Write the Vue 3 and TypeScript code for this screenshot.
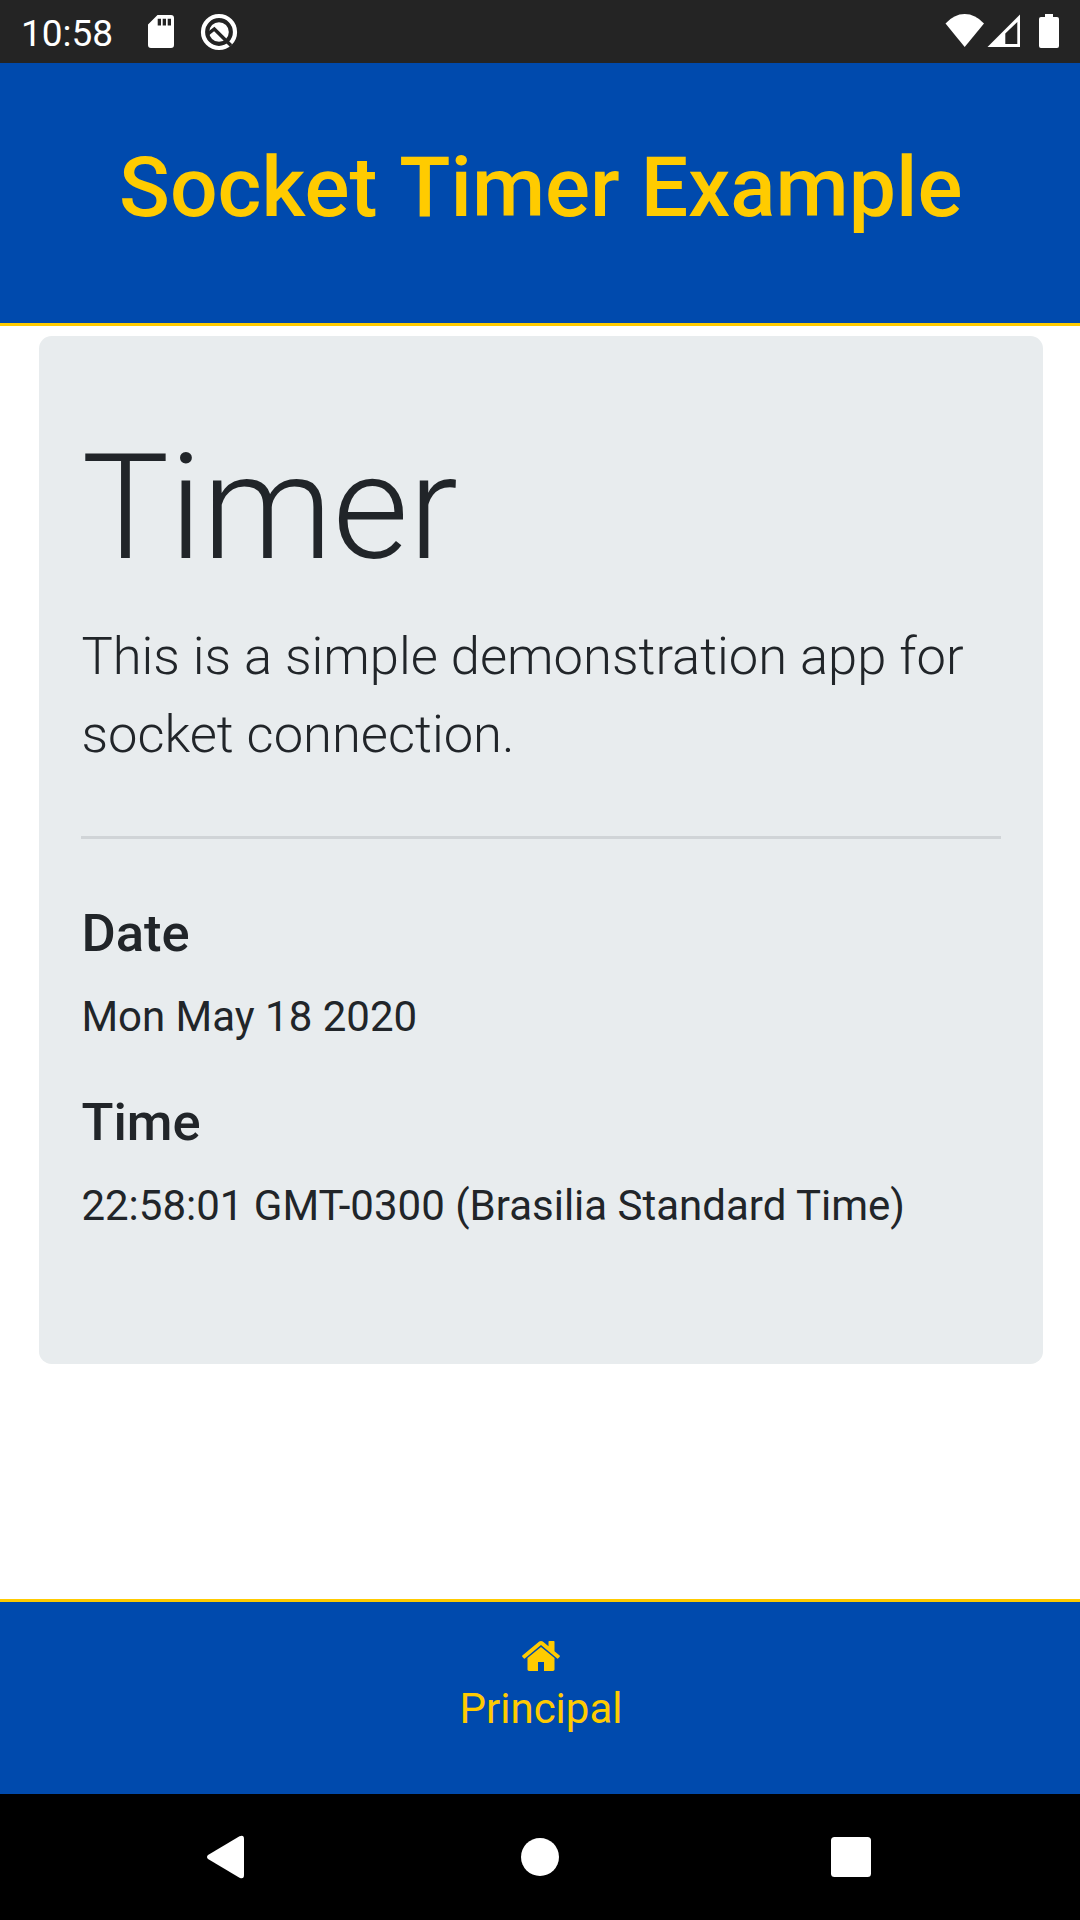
<script setup lang="ts">
interface Entry {
  label: string
  value: string
}

const entries: Entry[] = [
  { label: 'Date', value: 'Mon May 18 2020' },
  { label: 'Time', value: '22:58:01 GMT-0300 (Brasilia Standard Time)' },
]
</script>

<template>
  <div class="screen">
    <div class="status">
      <span class="clock">10:58</span>
      <svg class="sd" width="28" height="36" viewBox="0 0 28 36">
        <path fill="#fff" fill-rule="evenodd" d="M10.500 1H24a3 3 0 0 1 3 3V31a3 3 0 0 1-3 3H4a3 3 0 0 1-3-3V10.500zM10.700 4.800v6.700h3.300V4.800zM15.700 4.800v6.700h3.300V4.800zM20.700 4.800v6.700h3.300V4.800z" />
      </svg>
      <svg class="q" width="38" height="38" viewBox="0 0 38 38">
        <circle cx="19" cy="19" r="16" fill="none" stroke="#fff" stroke-width="4.200" />
        <circle cx="19" cy="19" r="9.800" fill="#fff" />
        <path d="M8 20.800L14.300 16L31 32.500" fill="none" stroke="#242424" stroke-width="3.400" />
      </svg>
      <div class="signals">
        <svg width="120" height="40" viewBox="0 0 120 40">
          <path fill="#fff" d="M.500 12.500Q9 3 19.700 3T39 12.500L19.700 36z" />
          <path fill="#fff" fill-rule="evenodd" d="M75 3.500V36H42.500zM72.300 11L60.300 22.500V33h12z" />
          <path fill="#fff" d="M100 3h8v3h4a2 2 0 0 1 2 2v27a2 2 0 0 1-2 2H96a2 2 0 0 1-2-2V8a2 2 0 0 1 2-2h4z" />
        </svg>
      </div>
    </div>

    <header class="header">
      <h1>Socket <span class="word">Timer</span> Example</h1>
    </header>

    <main class="content">
      <section class="jumbotron">
        <h2 class="display">Timer</h2>
        <p class="lead">This is a simple demonstration app for socket connection.</p>
        <hr />
        <template v-for="e in entries" :key="e.label">
          <h5>{{ e.label }}</h5>
          <p class="value">{{ e.value }}</p>
        </template>
      </section>
    </main>

    <footer class="footer">
      <svg width="42" height="42" viewBox="0 0 1792 1792">
        <path fill="currentColor" d="M1472 992v480q0 26-19 45t-45 19h-384v-384h-256v384h-384q-26 0-45-19t-19-45v-480q0-1 .5-3t.5-3l575-474 575 474q1 2 1 6zm223-69l-62 74q-8 9-21 11h-3q-13 0-21-7l-692-577-692 577q-12 8-24 7-13-2-21-11l-62-74q-8-10-7-23.500t11-21.500l719-599q32-26 76-26t76 26l244 204v-195q0-14 9-23t23-9h192q14 0 23 9t9 23v408l219 182q10 8 11 21.500t-7 23.500z" />
      </svg>
      <span>Principal</span>
    </footer>

    <nav class="navbar">
      <svg width="1080" height="126" viewBox="0 0 1080 126">
        <path fill="#fff" d="M208 61L239.500 42.300Q244 40.500 244 45V81Q244 85.500 239.500 83.700L208 65Q206 63 208 61z" />
        <circle cx="540" cy="63" r="19" fill="#fff" />
        <rect x="831" y="43" width="40" height="40" rx="3.500" fill="#fff" />
      </svg>
    </nav>
  </div>
</template>

<style>
body {
  margin: 0;
  background: #fff;
}
</style>

<style scoped>
.screen {
  width: 1080px;
  height: 1920px;
  display: flex;
  flex-direction: column;
  overflow: hidden;
  background: #fff;
  color: #212529;
  font-family: Roboto, "Liberation Sans", sans-serif;
}
h1, h2, h5, p {
  margin: 0;
}
svg {
  display: block;
  flex: none;
}
.status {
  height: 63px;
  flex: none;
  display: flex;
  align-items: flex-start;
  background: #242424;
  color: #fff;
}
.clock {
  width: 126px;
  padding-left: 21px;
  font-size: 37px;
  line-height: 67px;
  white-space: nowrap;
}
.sd {
  margin-top: 14px;
}
.q {
  margin: 13px 0 0 25px;
}
.signals {
  margin: 11px 15px 0 auto;
}
.header {
  box-sizing: border-box;
  height: 263px;
  flex: none;
  padding: 74px 0 0 1.500px;
  background: #004aad;
  border-bottom: 3px solid #ffcb00;
  color: #ffcb00;
  text-align: center;
}
.header h1 {
  font-size: 84px;
  font-weight: 500;
  line-height: 101px;
  white-space: nowrap;
}
.word {
  margin-left: 1px;
}
.content {
  flex: 1;
  padding: 10px 37px 0 39.400px;
}
.jumbotron {
  box-sizing: border-box;
  height: 1028px;
  padding: 84px 42px;
  border-radius: 12.600px;
  background: #e8ecee;
}
.display {
  margin-bottom: 21px;
  font-size: 147px;
  font-weight: 300;
  line-height: 176px;
}
.lead {
  font-size: 52.500px;
  font-weight: 300;
  line-height: 78px;
}
hr {
  height: 3px;
  margin: 63px 0;
  border: 0;
  background: #d0d4d7;
}
h5 {
  margin-bottom: 20px;
  font-size: 52.500px;
  font-weight: 500;
  line-height: 63px;
}
.value {
  margin-bottom: 43px;
  font-size: 42px;
  line-height: 63px;
  white-space: nowrap;
}
.footer {
  box-sizing: border-box;
  height: 195px;
  flex: none;
  display: flex;
  flex-direction: column;
  align-items: center;
  padding: 33px 0 0 2px;
  background: #004aad;
  border-top: 3px solid #ffcb00;
  color: #ffcb00;
  font-size: 42px;
  line-height: 63px;
}
.navbar {
  height: 126px;
  flex: none;
  background: #000;
}
</style>
